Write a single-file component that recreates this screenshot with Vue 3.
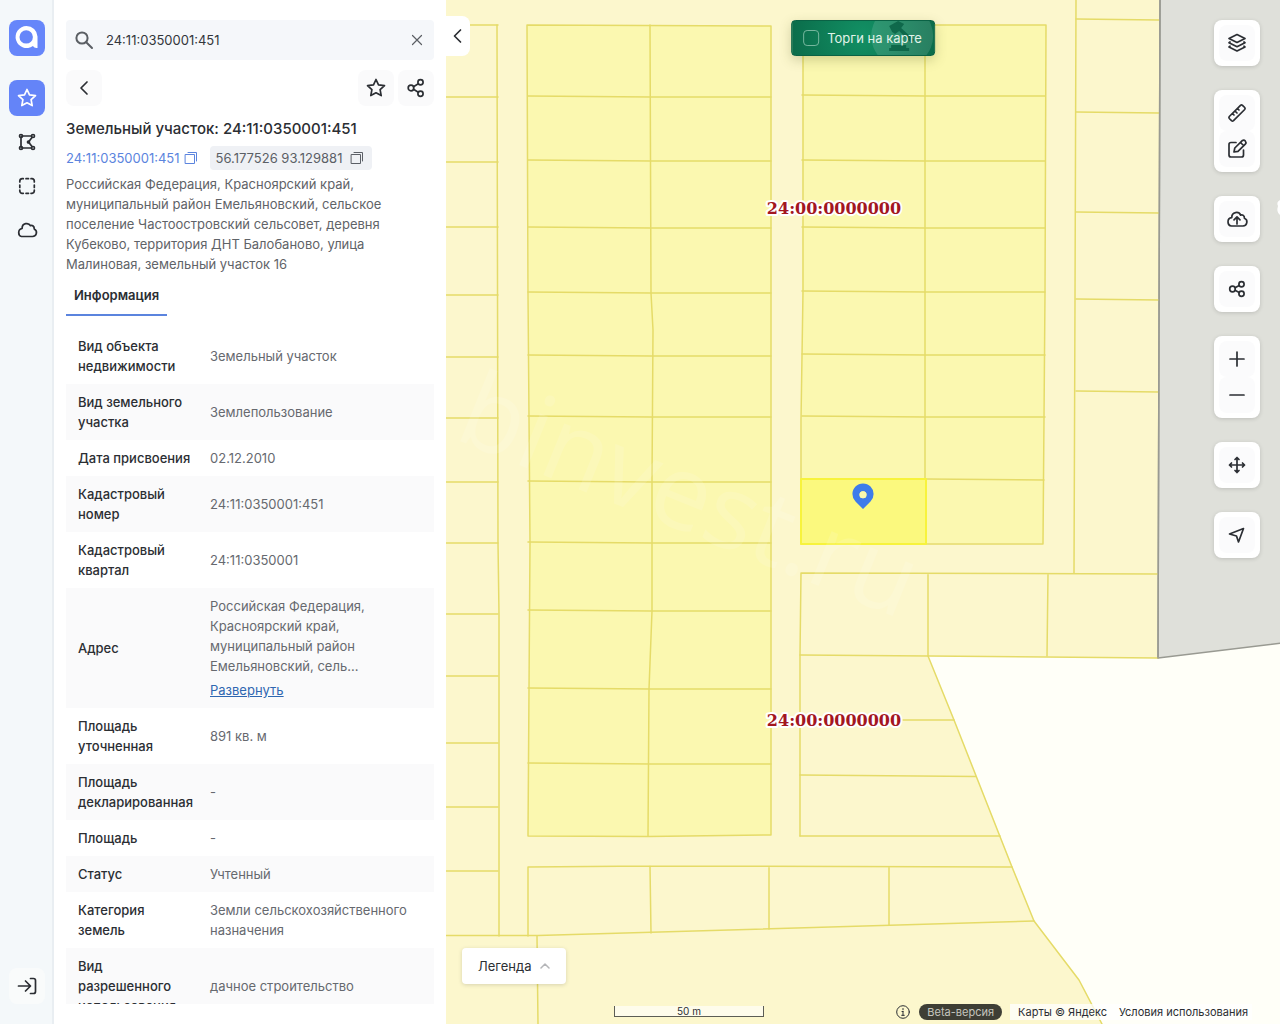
<script setup>
import { ref } from 'vue'

const query = ref('24:11:0350001:451')
const auctions = ref(false)

const rows = [
  { name: 'Вид объекта недвижимости', value: 'Земельный участок' },
  { name: 'Вид земельного участка', value: 'Землепользование' },
  { name: 'Дата присвоения', value: '02.12.2010' },
  { name: 'Кадастровый номер', value: '24:11:0350001:451' },
  { name: 'Кадастровый квартал', value: '24:11:0350001' },
  { name: 'Адрес', value: 'Российская Федерация, Красноярский край, муниципальный район Емельяновский, сель...', more: true },
  { name: 'Площадь уточненная', value: '891 кв. м' },
  { name: 'Площадь декларированная', value: '-' },
  { name: 'Площадь', value: '-' },
  { name: 'Статус', value: 'Учтенный' },
  { name: 'Категория земель', value: 'Земли сельскохозяйственного назначения' },
  { name: 'Вид разрешенного использования', value: 'дачное строительство' },
]

const westLots = [25, 97, 162, 227, 295, 357, 418, 482, 543, 614, 676, 743, 807, 871]
const blockALots = [97, 161, 228, 293, 356, 417, 482, 543, 611, 689, 764]
const blockBLots = [96, 161, 228, 292, 355, 417]
const eastLots = [19, 112, 212, 299, 391]
</script>

<template>
  <div class="app">
    <nav class="rail" aria-label="Разделы">
      <a class="logo" href="#" aria-label="Главная">
        <svg viewBox="0 0 36 36" width="36" height="36">
          <path d="M17.500 6a11 11 0 0 1 11 10.500V28q-3 .6-4.600-2A11 11 0 1 1 17.500 6zM17.200 10.200a6.700 6.700 0 1 0 0 13.400a6.700 6.700 0 0 0 0-13.400z" fill="#fff" fill-rule="evenodd" />
        </svg>
      </a>
      <button class="rail-btn active" aria-label="Избранное">
        <svg viewBox="0 0 24 24" width="24" height="24"><path d="M12 3.500l2.500 5.400 6 .8-4.400 4 1.100 5.900L12 16.800l-5.200 2.800 1.100-5.900-4.400-4 6-.8z" /></svg>
      </button>
      <button class="rail-btn" aria-label="Полигон">
        <svg viewBox="0 0 24 24" width="24" height="24"><path d="M7 6h9.500M7 18h9.500M6 7v10M17 7.500l-3.500 4.500 3.500 4.500" /><circle cx="6" cy="6" r="1.500" /><circle cx="18" cy="6" r="1.500" /><circle cx="6" cy="18" r="1.500" /><circle cx="18" cy="18" r="1.500" /><circle cx="13.500" cy="12" r="1" /></svg>
      </button>
      <button class="rail-btn" aria-label="Выделить область">
        <svg viewBox="0 0 24 24" width="24" height="24"><path d="M4.800 8V7a2.500 2.500 0 0 1 2.500-2.300h1M11 4.700h2.500M16 4.700h1A2.500 2.500 0 0 1 19.300 7v1M19.300 11v2.500M19.300 16v1a2.500 2.500 0 0 1-2.300 2.300h-1M13.500 19.300H11M8.300 19.300h-1A2.500 2.500 0 0 1 4.800 17v-1M4.800 13.500V11" /></svg>
      </button>
      <button class="rail-btn" aria-label="Облако">
        <svg viewBox="0 0 24 24" width="24" height="24"><path d="M6.500 18.500h11a4 4 0 0 0 1.700-7.600c.3-2.600-2-4-3.800-3.200-1.600-3.300-8.400-3-8.300 2.800-4.600.8-4.200 7.500-.6 8z" /></svg>
      </button>
      <button class="rail-btn login" aria-label="Войти">
        <svg viewBox="0 0 24 24" width="24" height="24"><path d="M3.500 12h11.500M10.500 7l5 5-5 5M15.500 4.500h3a2 2 0 0 1 2 2v11a2 2 0 0 1-2 2h-3" /></svg>
      </button>
    </nav>

    <aside class="panel">
      <div class="search">
        <svg viewBox="0 0 20 20" width="20" height="20"><circle cx="8" cy="8" r="5.600" /><path d="M12.200 12.200l5.800 5.800" /></svg>
        <input v-model="query" type="text" aria-label="Поиск" />
        <button class="clear" aria-label="Очистить" @click="query = ''">
          <svg viewBox="0 0 12 12" width="12" height="12"><path d="M1.500 1.500l9 9M10.500 1.500l-9 9" /></svg>
        </button>
      </div>

      <div class="actions">
        <button class="square" aria-label="Назад"><svg viewBox="0 0 24 24" width="24" height="24"><path d="M15 6l-6 6 6 6" /></svg></button>
        <span class="grow"></span>
        <button class="square" aria-label="В избранное"><svg viewBox="0 0 24 24" width="24" height="24"><path d="M12 3.500l2.500 5.400 6 .8-4.400 4 1.100 5.900L12 16.800l-5.200 2.800 1.100-5.900-4.400-4 6-.8z" /></svg></button>
        <button class="square" aria-label="Поделиться"><svg viewBox="0 0 24 24" width="24" height="24"><circle cx="7" cy="12" r="2.800" /><circle cx="16.500" cy="6.300" r="2.600" /><circle cx="16.500" cy="17.700" r="2.600" /><path d="M9.500 10.700l4.800-2.900M9.500 13.300l4.800 2.900" /></svg></button>
      </div>

      <h1>Земельный участок: 24:11:0350001:451</h1>

      <div class="ids">
        <a class="cad" href="#">24:11:0350001:451
          <svg viewBox="0 0 14 14" width="14" height="14"><path d="M1.500 3.500h9v9h-9zM4 1.500h8.500V10" /></svg>
        </a>
        <button class="coords">56.177526 93.129881
          <svg viewBox="0 0 14 14" width="14" height="14"><path d="M1.500 3.500h9v9h-9zM4 1.500h8.500V10" /></svg>
        </button>
      </div>

      <p class="address">Российская Федерация, Красноярский край, муниципальный район Емельяновский, сельское поселение Частоостровский сельсовет, деревня Кубеково, территория ДНТ Балобаново, улица Малиновая, земельный участок 16</p>

      <div class="tabs" role="tablist"><button role="tab" aria-selected="true">Информация</button></div>

      <div class="scroll">
        <table>
          <tbody>
            <tr v-for="row in rows" :key="row.name">
              <th scope="row">{{ row.name }}</th>
              <td>{{ row.value }}<a v-if="row.more" class="more" href="#">Развернуть</a></td>
            </tr>
          </tbody>
        </table>
      </div>
    </aside>

    <main class="map">
      <svg class="canvas" viewBox="446 0 834 1024" preserveAspectRatio="xMinYMin slice" aria-hidden="true">
        <rect x="446" width="834" height="1024" fill="#fffff8" />
        <path d="M446 0H1160L1158 658L928 656L954 720L1034 921L1079 980L1102 1024H446z" fill="#fcf7cd" />
        <path d="M1160 0L1158 658L1290 642V-5H1160z" fill="#dfe0da" stroke="#999a92" stroke-width="1.500" />
        <path d="M527 25L771 26V835L648 836.500L528 836L530 543L529 300z" fill="#fbf8b0" />
        <path d="M803 25H1046L1043 543H801L802 355z" fill="#fbf8b0" />

        <g class="lots">
          <path v-for="y in westLots" :key="'w' + y" :d="`M446 ${y}H498`" />
          <path v-for="y in blockALots" :key="'a' + y" :d="`M528 ${y - 1}L651 ${y}H771`" />
          <path v-for="y in blockBLots" :key="'b' + y" :d="`M802 ${y - 1}L926 ${y}H1045`" />
          <path v-for="y in eastLots" :key="'e' + y" :d="`M1076 ${y}L1159 ${y + 1}`" />
          <path d="M497 25L498 543L499 614V936" />
          <path d="M527 25L771 26V835L648 836.500L528 836L530 543L529 417L528 293z" />
          <path d="M650 25L651 293L653 330L652 480V611L649 689L648 836" />
          <path d="M803 25H1046L1045 292L1043 544H801V420L803 292z" />
          <path d="M925 25V544M926 479L1044 480" />
          <path d="M1076 0L1075 300L1074 573" />
          <path d="M800 836V655L801 573L1158 574M928 574V656M1048 574L1047 656" />
          <path d="M800 655L928 656L1158 658M903 720H954M800 775L976 776.500M800 836H1000" />
          <path d="M928 656L954 720L1012 867L1034 921L1079 980L1102 1024" />
          <path d="M528 936V867L650 866L1012 867M650 866L651 933M769 867V929M889 867V925" />
          <path d="M446 935.500H538L1034 921M537 936L538 1024" />
        </g>
        <path d="M1160 0L1158 658" stroke="#999a92" stroke-width="1.500" />
        <path d="M801 479H926V544H801z" fill="#fbf97e" stroke="#f7f33c" stroke-width="2" />
        <text class="mark" transform="translate(452 438) rotate(22)">binvest.ru</text>
        <g class="quarter">
          <text x="834" y="214">24:00:0000000</text>
          <text x="834" y="726">24:00:0000000</text>
        </g>
        <path d="M1280 200q-4 2-2 6q-2 6 2 9" fill="#fff" />
        <path d="M863 509l-7.500-7.500a10.600 10.600 0 1 1 15 0zM863 491.300a3.500 3.500 0 1 0 0 7a3.500 3.500 0 0 0 0-7z" fill="#3e7cea" fill-rule="evenodd" />
        <circle cx="863" cy="494.800" r="3.500" fill="#fbf9ae" />
      </svg>

      <button class="collapse" aria-label="Свернуть панель"><svg viewBox="0 0 24 24" width="24" height="24"><path d="M14.500 6l-6 6 6 6" /></svg></button>

      <label class="auction">
        <svg class="gavel" viewBox="0 0 64 36" width="64" height="36">
          <circle cx="32" cy="16" r="31" fill="#fff" opacity=".12" />
          <path d="M19 6l9-5 6 3-3 4 13 12-3 3-12-12-4 3-3-2zM21 25h15v3h3v3H19v-3h2z" fill="#055c40" opacity=".75" />
        </svg>
        <input v-model="auctions" type="checkbox" />
        <span>Торги на карте</span>
      </label>

      <div class="tools">
        <div class="group"><button aria-label="Слои"><svg viewBox="0 0 24 24" width="24" height="24"><path d="M12 3.500l8 4-8 4-8-4zM5 11l-1 .7 8 4 8-4-1-.7M5 15.200l-1 .7 8 4 8-4-1-.7" /></svg></button></div>
        <div class="group">
          <button aria-label="Линейка"><svg viewBox="0 0 24 24" width="24" height="24"><path d="M4.300 15.500L15.500 4.300q1-.8 2 0l2.200 2.200q.8 1 0 2L8.500 19.700q-1 .8-2 0l-2.200-2.200q-.8-1 0-2zM7.500 12.500l1.500 1.500M10 10l2 2M12.500 7.500L14 9" /></svg></button>
          <button aria-label="Редактировать"><svg viewBox="0 0 24 24" width="24" height="24"><path d="M11 5.500H6a2 2 0 0 0-2 2V18a2 2 0 0 0 2 2h10.500a2 2 0 0 0 2-2v-5M9 15l.8-4L17 3.800q2-1.300 3.300.2t0 3.200L13 14.300zM15.500 5.500l3 3" /></svg></button>
        </div>
        <div class="group"><button aria-label="Загрузить"><svg viewBox="0 0 24 24" width="24" height="24"><path d="M6.500 19h11.500a4 4 0 0 0 1.400-7.700c.3-2.600-2-4-3.800-3.200-1.600-4-9-3.500-8.800 2.500-5.300.6-4.700 8-.3 8.400zM12 17v-7M9 12.800l3-3 3 3" /></svg></button></div>
        <div class="group"><button aria-label="Поделиться картой"><svg viewBox="0 0 24 24" width="24" height="24"><circle cx="7.500" cy="12" r="2.800" /><circle cx="16.500" cy="7.300" r="2.600" /><circle cx="16.500" cy="16.700" r="2.600" /><path d="M10 10.700l4.200-2.200M10 13.300l4.200 2.200" /></svg></button></div>
        <div class="group">
          <button aria-label="Приблизить"><svg viewBox="0 0 24 24" width="24" height="24"><path d="M5 12h14M12 5v14" /></svg></button>
          <button aria-label="Отдалить"><svg viewBox="0 0 24 24" width="24" height="24"><path d="M5 12h14" /></svg></button>
        </div>
        <div class="group"><button aria-label="Переместить"><svg viewBox="0 0 24 24" width="24" height="24"><path d="M12 4.500v15M4.500 12h15M10 6.500l2-2 2 2M10 17.500l2 2 2-2M6.500 10l-2 2 2 2M17.500 10l2 2-2 2" /></svg></button></div>
        <div class="group"><button aria-label="Моё местоположение"><svg viewBox="0 0 24 24" width="24" height="24"><path d="M18.500 5.500L4.500 11l7 2 2 6z" /></svg></button></div>
      </div>

      <button class="legend">Легенда
        <svg viewBox="0 0 10 10" width="10" height="10"><path d="M1 7l4-4 4 4" /></svg>
      </button>

      <div class="scale">50 m</div>

      <footer class="credits">
        <svg viewBox="0 0 14 14" width="14" height="14"><circle cx="7" cy="7" r="6.300" /><path d="M7 6.300v4M6 6.500h1M5.700 10.300h2.600M7 3.500v1.200" /></svg>
        <span class="beta">Beta-версия</span>
        <span class="links"><a href="#">Карты © Яндекс</a><a href="#">Условия использования</a></span>
      </footer>
    </main>
  </div>
</template>

<style>
body { margin: 0; }
</style>

<style scoped>
.app { display: flex; height: 100vh; overflow: hidden; font: 13px/20px Inter, "Noto Sans", sans-serif; color: #2b2e33; background: #fff; }
.app * { box-sizing: border-box; }
button, input { font: inherit; color: inherit; margin: 0; border: 0; }
button { display: flex; align-items: center; justify-content: center; padding: 0; background: none; cursor: pointer; }
a { color: inherit; text-decoration: none; }
svg { flex: none; fill: none; stroke: currentColor; stroke-width: 1.5; stroke-linecap: round; stroke-linejoin: round; }
.rail svg, .square svg, .group svg, .collapse svg { stroke-width: 1.7; }
.rail .logo svg, .canvas, .gavel { stroke: none; }

.rail { flex: none; width: 54px; padding: 20px 7px 20px 9px; display: flex; flex-direction: column; gap: 8px; background: #f4f8fa; border-right: 2px solid #e9eef2; }
.logo { height: 36px; margin-bottom: 16px; border-radius: 8px; background: #6686fa; }
.rail-btn { width: 36px; height: 36px; border-radius: 8px; }
.rail-btn.active { background: #6484f8; color: #fff; }
.login { margin-top: auto; background: #f9fbfb; }

.panel { flex: none; width: 392px; padding: 20px 12px; display: flex; flex-direction: column; }
.search { flex: none; display: flex; align-items: center; height: 40px; padding: 0 10px 0 8px; background: #f5f7fa; border-radius: 4px; color: #5b5f64; }
.search svg { stroke-width: 2; }
.search input { flex: 1; min-width: 0; margin-left: 12px; padding: 0; background: none; outline: 0; color: #33363b; }
.search .clear { width: 14px; height: 14px; }
.search .clear svg { stroke-width: 1.2; }
.actions { display: flex; gap: 4px; margin-top: 10px; }
.grow { flex: 1; }
.square { width: 36px; height: 36px; border-radius: 8px; background: #fafafb; }
h1 { margin: 12px 0 6px; font-size: 15px; line-height: 22px; font-weight: 500; white-space: nowrap; }
.ids { display: flex; gap: 12px; height: 24px; align-items: center; }
.ids svg { stroke-width: 1; }
.cad { display: flex; align-items: center; gap: 4px; color: #5b84de; }
.coords { height: 24px; padding: 0 8px 0 6px; gap: 8px; border-radius: 4px; background: #eff1f5; color: #5b5f66; }
.address { margin: 4px 0 0; padding-right: 40px; color: #5f6368; }
.tabs { display: flex; margin: 2px 0 12px; }
.tabs button { height: 40px; padding: 0 8px; border-bottom: 2px solid #5b84de; font-weight: 600; }
.scroll { flex: 1; min-height: 0; overflow: hidden; }
table { width: 100%; border-collapse: collapse; table-layout: fixed; }
tr:nth-child(even) { background: #fafafb; }
th { width: 132px; padding: 8px 4px 8px 12px; text-align: left; font-weight: 500; }
td { padding: 8px 12px; color: #66696f; }
.more { display: block; width: fit-content; margin-top: 4px; color: #2f67b1; text-decoration: underline; }

.map { position: relative; flex: 1; min-width: 0; overflow: hidden; }
.canvas { display: block; width: 100%; height: 100%; }
.lots { fill: none; stroke: #e5db68; stroke-width: 1.5; }
.mark { font: 104px "Open Sans", sans-serif; fill: #fff; opacity: .12; }
.quarter { font: bold 16px "DejaVu Serif", serif; fill: #a31621; stroke: #fff; stroke-width: 4; paint-order: stroke; text-anchor: middle; }
.collapse { position: absolute; top: 16px; left: 0; width: 24px; height: 40px; border-radius: 0 8px 8px 0; background: #fff; }
.auction { position: absolute; top: 20px; left: 50%; transform: translateX(-50%); height: 36px; padding: 0 12px 0 11px; display: flex; align-items: center; gap: 8px; overflow: hidden; white-space: nowrap; border: 1px solid #0a6245; border-radius: 4px; background: radial-gradient(circle at 50% 40%, #129064, #0b6c4a); color: #e0f3e9; box-shadow: 0 4px 12px rgba(80, 90, 30, .25); }
.auction input { appearance: none; width: 16px; height: 16px; border: 1px solid #76b79e; border-radius: 4px; }
.auction span { position: relative; }
.gavel { position: absolute; right: 0; top: -1px; }
.tools { position: absolute; top: 20px; right: 20px; display: flex; flex-direction: column; gap: 24px; }
.group { padding: 5px; border-radius: 8px; background: #fff; box-shadow: 0 1px 4px rgba(0, 0, 0, .15); }
.group button { width: 36px; height: 36px; border-radius: 8px; background: #fbfbfc; }
.legend { position: absolute; left: 16px; bottom: 40px; height: 36px; padding: 0 16px; gap: 8px; border-radius: 4px; background: #fff; box-shadow: 0 1px 4px rgba(0, 0, 0, .15); }
.legend svg { color: #b4b5b8; }
.scale { position: absolute; left: 168px; bottom: 7px; width: 150px; height: 11px; border: 1px solid #5c5d55; border-top: 0; background: rgba(255, 255, 255, .6); font-size: 10px; line-height: 10px; text-align: center; }
.credits { position: absolute; right: 28px; bottom: 4px; display: flex; align-items: center; height: 16px; font-size: 11px; line-height: 16px; white-space: nowrap; }
.credits svg { stroke-width: 1; }
.beta { margin: 0 8px 0 9px; padding: 0 8px; border-radius: 8px; background: #3e3e35; color: #c5c5be; }
.links { display: flex; gap: 12px; padding: 0 4px 0 8px; background: rgba(255, 255, 255, .75); }
</style>
